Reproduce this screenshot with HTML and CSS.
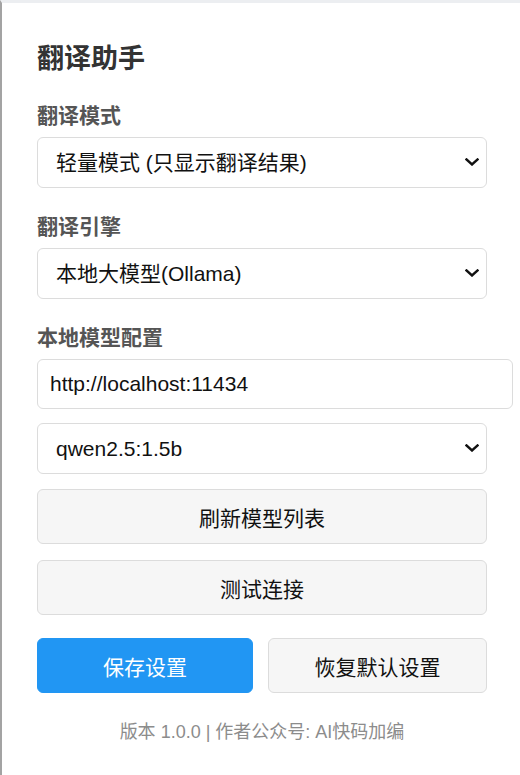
FILE: index.html
```html
<!DOCTYPE html>
<html lang="zh-CN">
<head>
<meta charset="utf-8">
<title>翻译助手</title>
<link rel="stylesheet" href="styles.css">
</head>
<body>
<div class="frame">
  <div class="popup">
    <h1 class="title">翻译助手</h1>

    <div class="group">
      <label class="label">翻译模式</label>
      <div class="select-wrap">
        <select class="select">
          <option>轻量模式 (只显示翻译结果)</option>
        </select>
        <svg class="chevron" viewBox="0 0 14 8" width="14" height="8"><path d="M1.5 1.5 L7 6.5 L12.5 1.5" fill="none" stroke="#111" stroke-width="2.4" stroke-linecap="square"/></svg>
      </div>
    </div>

    <div class="group">
      <label class="label">翻译引擎</label>
      <div class="select-wrap">
        <select class="select">
          <option>本地大模型(Ollama)</option>
        </select>
        <svg class="chevron" viewBox="0 0 14 8" width="14" height="8"><path d="M1.5 1.5 L7 6.5 L12.5 1.5" fill="none" stroke="#111" stroke-width="2.4" stroke-linecap="square"/></svg>
      </div>
    </div>

    <div class="group">
      <label class="label">本地模型配置</label>
      <input class="input" type="text" value="http://localhost:11434">
      <div class="select-wrap spaced">
        <select class="select">
          <option>qwen2.5:1.5b</option>
        </select>
        <svg class="chevron" viewBox="0 0 14 8" width="14" height="8"><path d="M1.5 1.5 L7 6.5 L12.5 1.5" fill="none" stroke="#111" stroke-width="2.4" stroke-linecap="square"/></svg>
      </div>
      <button class="btn btn-light block first">刷新模型列表</button>
      <button class="btn btn-light block">测试连接</button>
    </div>

    <div class="actions">
      <button class="btn btn-primary">保存设置</button>
      <button class="btn btn-light">恢复默认设置</button>
    </div>

    <div class="footer">版本 1.0.0 | 作者公众号: AI快码加编</div>
  </div>
</div>
</body>
</html>
```

FILE: styles.css
```css
html, body {
  margin: 0;
  padding: 0;
  background: #ffffff;
}

body {
  font-family: "Liberation Sans", "Noto Sans CJK SC", sans-serif;
  color: #111;
}

.frame {
  min-height: 772px;
  border-top: 3px solid #eceef1;
  border-left: 2px solid #a3a3a3;
}

.popup {
  width: 450px;
  padding: 40px 33px 0 35px;
}

.title {
  margin: 0 0 28px;
  font-size: 27px;
  line-height: 32px;
  font-weight: 700;
  color: #333;
}

.group {
  margin-bottom: 26px;
}

.label {
  display: block;
  font-size: 21px;
  line-height: 25px;
  font-weight: 700;
  color: #555;
  margin-bottom: 9px;
}

.select-wrap {
  position: relative;
}

.select-wrap.spaced {
  margin-top: 14px;
}

.select {
  appearance: none;
  -webkit-appearance: none;
  display: block;
  width: 100%;
  height: 51px;
  box-sizing: border-box;
  border: 1px solid #dcdcdc;
  border-radius: 6px;
  background: #fff;
  padding: 0 40px 0 18px;
  font-family: inherit;
  font-size: 21px;
  color: #111;
}

.chevron {
  position: absolute;
  right: 8px;
  top: 21px;
}

.input {
  display: block;
  width: 100%;
  height: 48px;
  box-sizing: content-box;
  padding: 0 12px;
  border: 1px solid #dcdcdc;
  border-radius: 6px;
  font-family: inherit;
  font-size: 21px;
  color: #111;
  background: #fff;
}

.btn {
  height: 55px;
  border-radius: 6px;
  font-family: inherit;
  font-size: 21px;
  cursor: pointer;
  box-sizing: border-box;
}

.btn.block {
  display: block;
  width: 100%;
  margin-top: 16px;
}

.btn.block.first {
  margin-top: 15px;
}

.btn-light {
  background: #f6f6f6;
  border: 1px solid #dcdcdc;
  color: #111;
}

.btn-primary {
  background: #2196f3;
  border: 1px solid #2196f3;
  color: #fff;
}

.actions {
  display: flex;
  gap: 15px;
  margin-top: -3px;
}

.actions .btn {
  flex: 1 1 0;
}

.actions .btn-primary {
  flex: 0 0 216px;
}

.footer {
  margin-top: 27px;
  text-align: center;
  font-size: 18px;
  line-height: 24px;
  color: #8c8c8c;
}
```
